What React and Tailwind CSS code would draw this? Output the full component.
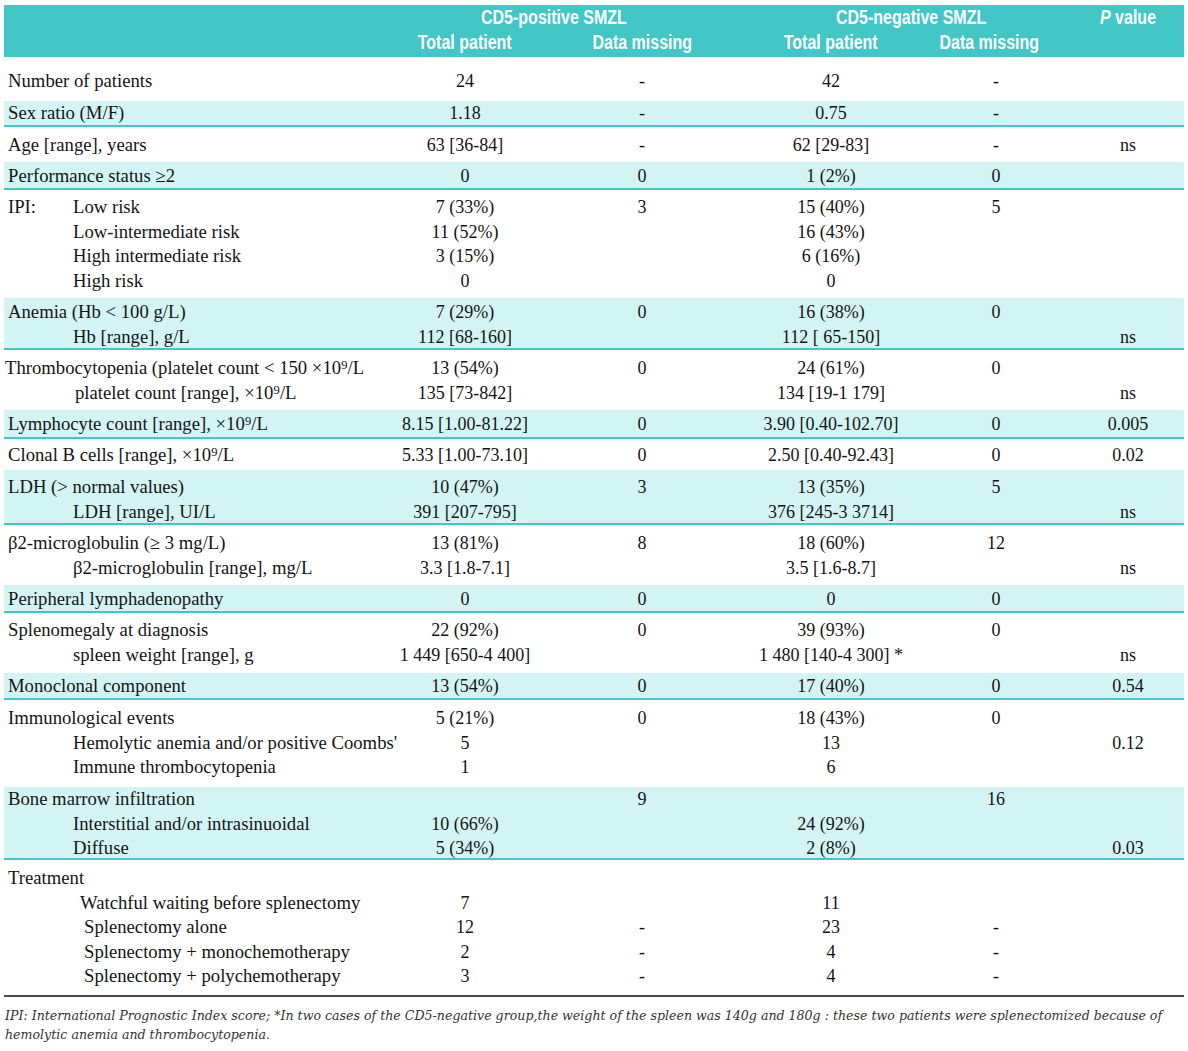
import React from "react";

const COLS = "grid grid-cols-[384px_154px_200px_178px_152px_112px]";

const rows = [
  { h: 44, pt: 12, lines: [{ l: "Number of patients", v: ["24", "-", "42", "-", ""] }] },
  { h: 26, pt: 0, shade: true, lines: [{ l: "Sex ratio (M/F)", v: ["1.18", "-", "0.75", "-", ""] }] },
  { h: 35, pt: 6, lines: [{ l: "Age [range], years", v: ["63 [36-84]", "-", "62 [29-83]", "-", "ns"] }] },
  { h: 28, pt: 2, shade: true, lines: [{ l: "Performance status ≥2", v: ["0", "0", "1 (2%)", "0", ""] }] },
  {
    h: 108, pt: 5, lines: [
      { pre: "IPI:", l: "Low risk", v: ["7 (33%)", "3", "15 (40%)", "5", ""] },
      { l: "Low-intermediate risk", ind: "pl-[69px]", v: ["11 (52%)", "", "16 (43%)", "", ""] },
      { l: "High intermediate risk", ind: "pl-[69px]", v: ["3 (15%)", "", "6 (16%)", "", ""] },
      { l: "High risk", ind: "pl-[69px]", v: ["0", "", "0", "", ""] },
    ],
  },
  {
    h: 52, pt: 2, shade: true, lines: [
      { l: "Anemia (Hb < 100 g/L)", v: ["7 (29%)", "0", "16 (38%)", "0", ""] },
      { l: "Hb [range], g/L", ind: "pl-[69px]", v: ["112 [68-160]", "", "112 [ 65-150]", "", "ns"] },
    ],
  },
  {
    h: 60, pt: 6, lines: [
      { l: "Thrombocytopenia (platelet count < 150 ×10⁹/L", ind: "pl-[1px]", v: ["13 (54%)", "0", "24 (61%)", "0", ""] },
      { l: "platelet count [range], ×10⁹/L", ind: "pl-[71px]", v: ["135 [73-842]", "", "134 [19-1 179]", "", "ns"] },
    ],
  },
  { h: 29, pt: 2, shade: true, lines: [{ l: "Lymphocyte count [range], ×10⁹/L", v: ["8.15 [1.00-81.22]", "0", "3.90 [0.40-102.70]", "0", "0.005"] }] },
  { h: 31, pt: 4, lines: [{ l: "Clonal B cells [range], ×10⁹/L", v: ["5.33 [1.00-73.10]", "0", "2.50 [0.40-92.43]", "0", "0.02"] }] },
  {
    h: 55, pt: 5, shade: true, lines: [
      { l: "LDH (> normal values)", v: ["10 (47%)", "3", "13 (35%)", "5", ""] },
      { l: "LDH [range], UI/L", ind: "pl-[69px]", v: ["391 [207-795]", "", "376 [245-3 3714]", "", "ns"] },
    ],
  },
  {
    h: 60, pt: 6, lines: [
      { l: "β2-microglobulin (≥ 3 mg/L)", v: ["13 (81%)", "8", "18 (60%)", "12", ""] },
      { l: "β2-microglobulin [range], mg/L", ind: "pl-[69px]", v: ["3.3 [1.8-7.1]", "", "3.5 [1.6-8.7]", "", "ns"] },
    ],
  },
  { h: 28, pt: 2, shade: true, lines: [{ l: "Peripheral lymphadenopathy", v: ["0", "0", "0", "0", ""] }] },
  {
    h: 60, pt: 5, lines: [
      { l: "Splenomegaly at diagnosis", v: ["22 (92%)", "0", "39 (93%)", "0", ""] },
      { l: "spleen weight [range], g", ind: "pl-[69px]", v: ["1 449 [650-4 400]", "", "1 480 [140-4 300] *", "", "ns"] },
    ],
  },
  { h: 27, pt: 1, shade: true, lines: [{ l: "Monoclonal component", v: ["13 (54%)", "0", "17 (40%)", "0", "0.54"] }] },
  {
    h: 87, pt: 6, lines: [
      { l: "Immunological events", v: ["5 (21%)", "0", "18 (43%)", "0", ""] },
      { l: "Hemolytic anemia and/or positive Coombs'", ind: "pl-[69px]", v: ["5", "", "13", "", "0.12"] },
      { l: "Immune thrombocytopenia", ind: "pl-[69px]", v: ["1", "", "6", "", ""] },
    ],
  },
  {
    h: 73, pt: 0, shade: true, lines: [
      { l: "Bone marrow infiltration", v: ["", "9", "", "16", ""] },
      { l: "Interstitial and/or intrasinuoidal", ind: "pl-[69px]", v: ["10 (66%)", "", "24 (92%)", "", ""] },
      { l: "Diffuse", ind: "pl-[69px]", v: ["5 (34%)", "", "2 (8%)", "", "0.03"] },
    ],
  },
  {
    h: 137, pt: 6, last: true, lines: [
      { l: "Treatment", v: ["", "", "", "", ""] },
      { l: "Watchful waiting before splenectomy", ind: "pl-[76px]", v: ["7", "", "11", "", ""] },
      { l: "Splenectomy alone", ind: "pl-[80px]", v: ["12", "-", "23", "-", ""] },
      { l: "Splenectomy + monochemotherapy", ind: "pl-[80px]", v: ["2", "-", "4", "-", ""] },
      { l: "Splenectomy + polychemotherapy", ind: "pl-[80px]", v: ["3", "-", "4", "-", ""] },
    ],
  },
];

function Line({ line }) {
  return (
    <div className={`${COLS} h-[24.5px] leading-[24.5px]`}>
      <div className={`whitespace-nowrap ${line.ind || "pl-[4px]"} flex text-[18.7px]`}>
        {line.pre && <span className="w-[65px] shrink-0">{line.pre}</span>}
        <span>{line.l}</span>
      </div>
      {line.v.map((v, i) => (
        <div key={i} className="text-center whitespace-nowrap">
          {v}
        </div>
      ))}
    </div>
  );
}

function HL({ children, center }) {
  return (
    <span
      className={`inline-block whitespace-nowrap scale-x-[0.8] ${
        center ? "origin-center" : "origin-left"
      }`}
    >
      {children}
    </span>
  );
}

export default function App() {
  return (
    <div className="w-[1188px] h-[1051px] bg-white pt-[5px] pl-[4px] text-[#141414]">
      <div className="w-[1180px] font-['Liberation_Serif',serif] text-[18px]">
        {/* Header */}
        <div className="h-[52px] bg-[#42c6c6] text-white font-['Liberation_Sans',sans-serif] font-bold text-[20px] leading-[25px]">
          <div className={`${COLS}`}>
            <div></div>
            <div className="col-span-2 pl-[93px]">
              <HL>CD5-positive SMZL</HL>
            </div>
            <div className="col-span-2 pl-[94px]">
              <HL>CD5-negative SMZL</HL>
            </div>
            <div className="text-center">
              <HL center>
                <span className="italic">P</span> value
              </HL>
            </div>
          </div>
          <div className={`${COLS}`}>
            <div></div>
            <div className="text-center"><HL center>Total patient</HL></div>
            <div className="text-center"><HL center>Data missing</HL></div>
            <div className="text-center"><HL center>Total patient</HL></div>
            <div className="text-center pr-[14px]"><HL center>Data missing</HL></div>
            <div></div>
          </div>
        </div>
        {rows.map((r, i) => (
          <div
            key={i}
            style={{ height: r.h, paddingTop: r.pt }}
            className={
              r.shade
                ? "bg-[#d3f4f4] border-b-2 border-[#42c6c6]"
                : r.last
                ? "border-b-2 border-[#4a4a4a]"
                : ""
            }
          >
            {r.lines.map((ln, j) => (
              <Line key={j} line={ln} />
            ))}
          </div>
        ))}
        <div className="pt-[9px] pl-[1px] font-['DejaVu_Serif',serif] italic text-[12.6px] leading-[19px] text-[#333] whitespace-nowrap">
          IPI: International Prognostic Index score; *In two cases of the CD5-negative group,the weight of the spleen was 140g and 180g : these two patients were splenectomized because of
          <br />
          hemolytic anemia and thrombocytopenia.
        </div>
      </div>
    </div>
  );
}
